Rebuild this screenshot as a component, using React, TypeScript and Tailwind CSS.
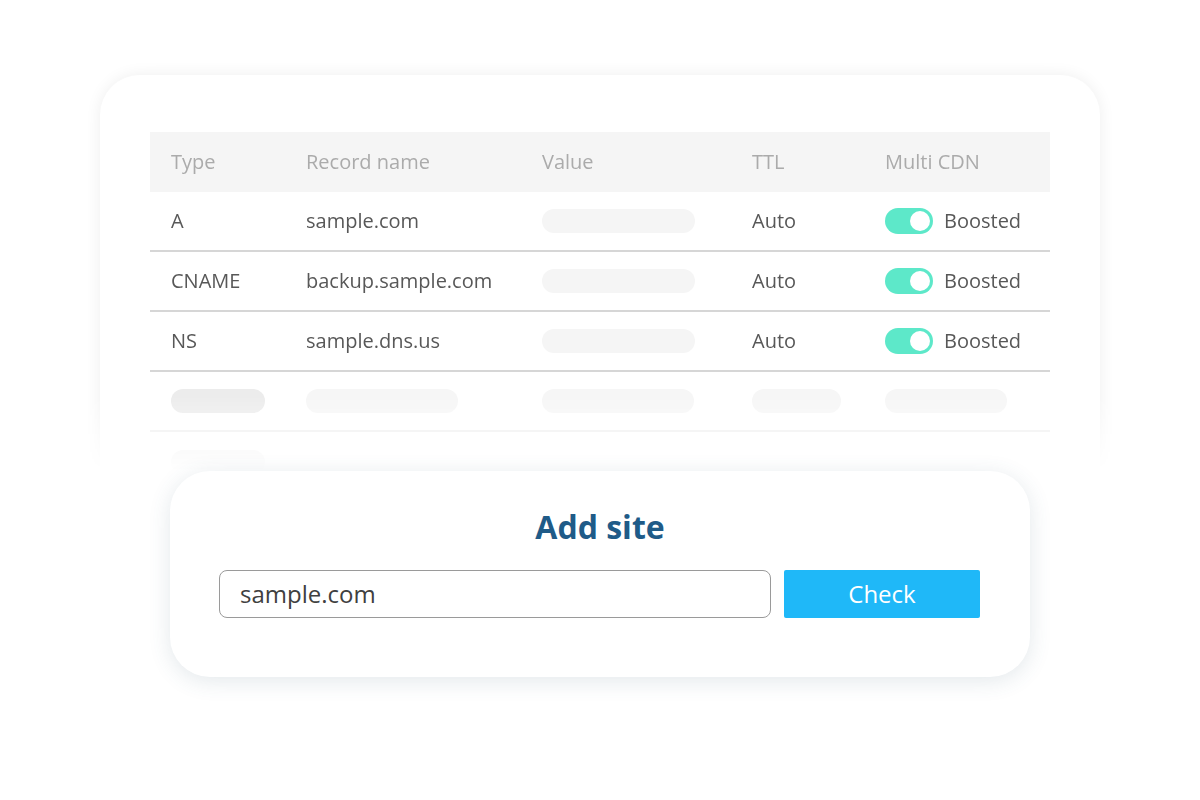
const rows = [
  { type: 'A', name: 'sample.com' },
  { type: 'CNAME', name: 'backup.sample.com' },
  { type: 'NS', name: 'sample.dns.us' },
];

const cols = 'grid grid-cols-[135px_236px_210px_133px_1fr] items-center pl-[21px]';

function Toggle() {
  return (
    <div className="flex h-[26px] w-[48px] items-center justify-end rounded-full bg-[#5de8c9] pr-[3px]">
      <div className="size-[20px] rounded-full bg-white" />
    </div>
  );
}

function Pill({ className }: { className: string }) {
  return <div className={`h-[24px] rounded-full ${className}`} />;
}

export default function App() {
  return (
    <div className="min-h-[800px] w-[1200px] bg-white pt-[55px] font-['Open_Sans',sans-serif]">
      {/* mask on the wrapper so the card's soft shadow still shows at the top */}
      <div className="mx-[80px] h-[416px] px-[20px] pt-[20px] [mask-image:linear-gradient(to_bottom,black_82%,transparent_100%)]">
        <div className="h-[420px] overflow-hidden rounded-t-[40px] bg-white px-[50px] pt-[57px] shadow-[0_0_16px_rgba(0,0,0,0.07)]">
          <div className={`${cols} h-[60px] bg-[#f5f5f5] text-[20px] text-[#ababab]`}>
            <div>Type</div>
            <div>Record name</div>
            <div>Value</div>
            <div>TTL</div>
            <div>Multi CDN</div>
          </div>
          {rows.map((row) => (
            <div key={row.type} className={`${cols} h-[60px] border-b-2 border-[#d6d6d6] text-[20px] text-[#585858]`}>
              <div>{row.type}</div>
              <div>{row.name}</div>
              <div>
                <Pill className="w-[153px] bg-[#f5f5f5]" />
              </div>
              <div>Auto</div>
              <div className="flex items-center gap-[11px]">
                <Toggle />
                <span>Boosted</span>
              </div>
            </div>
          ))}
          <div className={`${cols} h-[60px] border-b-2 border-[#ececec]`}>
            <Pill className="w-[94px] bg-[#ececec]" />
            <Pill className="w-[152px] bg-[#f6f6f6]" />
            <Pill className="w-[152px] bg-[#f6f6f6]" />
            <Pill className="w-[89px] bg-[#f6f6f6]" />
            <Pill className="w-[122px] bg-[#f6f6f6]" />
          </div>
          <div className="pl-[21px] pt-[18px]">
            <Pill className="w-[94px] bg-[#f0f0f0]" />
          </div>
        </div>
      </div>
      <div className="relative mx-[170px] h-[206px] w-[860px] rounded-[40px] bg-white px-[49px] pt-[35px] shadow-[0_4px_22px_rgba(60,90,110,0.14)]">
        <h1 className="text-center text-[32px] font-bold leading-[42px] text-[#1f5b88]">Add site</h1>
        <div className="mt-[22px] flex gap-[13px]">
          <div className="flex h-[48px] w-[552px] items-center rounded-[8px] border border-[#9a9a9a] px-[20px] text-[24px] text-[#404040]">
            sample.com
          </div>
          <button className="h-[48px] w-[196px] rounded-[2px] bg-[#1fb8f8] text-[24px] text-white">Check</button>
        </div>
      </div>
    </div>
  );
}
